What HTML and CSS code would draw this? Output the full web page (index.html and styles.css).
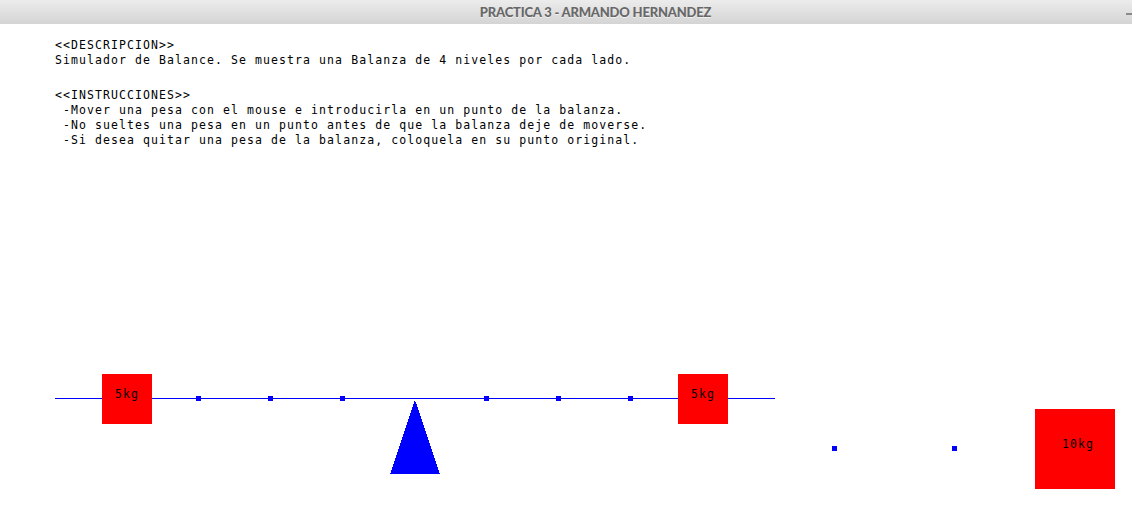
FILE: index.html
```html
<!DOCTYPE html>
<html lang="es">
<head>
<meta charset="utf-8">
<title>PRACTICA 3 - ARMANDO HERNANDEZ</title>
<link rel="stylesheet" href="styles.css">
</head>
<body>
<div class="window">
  <header class="titlebar">
    <span class="title">PRACTICA 3 - ARMANDO HERNANDEZ</span>
    <span class="min"></span>
  </header>
  <main class="stage">
    <section class="info">
      <div class="block">
        <div class="line">&lt;&lt;DESCRIPCION&gt;&gt;</div>
        <div class="line">Simulador de Balance. Se muestra una Balanza de 4 niveles por cada lado.</div>
      </div>
      <div class="block block-gap">
        <div class="line">&lt;&lt;INSTRUCCIONES&gt;&gt;</div>
        <div class="line"> -Mover una pesa con el mouse e introducirla en un punto de la balanza.</div>
        <div class="line"> -No sueltes una pesa en un punto antes de que la balanza deje de moverse.</div>
        <div class="line"> -Si desea quitar una pesa de la balanza, coloquela en su punto original.</div>
      </div>
    </section>
    <svg class="scene" width="1132" height="490" viewBox="0 24 1132 490" xmlns="http://www.w3.org/2000/svg">
      <g class="beam">
        <rect x="55" y="398" width="720" height="1" fill="#0000ff"/>
        <rect x="196" y="396" width="5" height="5" fill="#0000ff"/>
        <rect x="268" y="396" width="5" height="5" fill="#0000ff"/>
        <rect x="340" y="396" width="5" height="5" fill="#0000ff"/>
        <rect x="484" y="396" width="5" height="5" fill="#0000ff"/>
        <rect x="556" y="396" width="5" height="5" fill="#0000ff"/>
        <rect x="628" y="396" width="5" height="5" fill="#0000ff"/>
      </g>
      <polygon points="415,400 390,474 440,474" fill="#0000ff" shape-rendering="crispEdges"/>
      <rect x="832" y="446" width="5" height="5" fill="#0000ff"/>
      <rect x="952" y="446" width="5" height="5" fill="#0000ff"/>
      <g class="weight">
        <rect x="102" y="374" width="50" height="50" fill="#ff0000"/>
        <text x="115" y="398" class="label">5kg</text>
      </g>
      <g class="weight">
        <rect x="678" y="374" width="50" height="50" fill="#ff0000"/>
        <text x="691" y="398" class="label">5kg</text>
      </g>
      <g class="weight">
        <rect x="1035" y="409" width="80" height="80" fill="#ff0000"/>
        <text x="1062" y="448" class="label">10kg</text>
      </g>
    </svg>
  </main>
</div>
</body>
</html>
```
FILE: styles.css
```css
html, body {
  margin: 0;
  padding: 0;
  background: #ffffff;
}

.window {
  width: 1132px;
  height: 514px;
  overflow: hidden;
  display: flex;
  flex-direction: column;
}

.titlebar {
  height: 24px;
  flex: 0 0 24px;
  display: flex;
  align-items: center;
  justify-content: center;
  padding-left: 59px;
  box-sizing: border-box;
  background: linear-gradient(#ececec, #d4d4d4);
  position: relative;
}

.title {
  font-family: Lato, "Open Sans", sans-serif;
  font-weight: 900;
  font-size: 13px;
  color: #686868;
  text-shadow: 0 1px 0 rgba(255, 255, 255, 0.6);
  letter-spacing: -0.2px;
}

.min {
  position: absolute;
  right: 0;
  top: 13px;
  width: 6px;
  height: 2px;
  background: #8a8a8a;
}

.stage {
  position: relative;
  flex: 1;
  background: #ffffff;
}

.info {
  padding: 14px 0 0 55px;
  font-family: "DejaVu Sans Mono", monospace;
  font-size: 11.5px;
  letter-spacing: 1.08px;
  color: #000000;
}

.line {
  height: 15px;
  line-height: 15px;
  white-space: pre;
}

.block-gap {
  margin-top: 20px;
}

.scene {
  position: absolute;
  left: 0;
  top: 0;
}

.label {
  font-family: "DejaVu Sans Mono", monospace;
  font-size: 11.5px;
  letter-spacing: 1.08px;
  fill: #000000;
}
```
